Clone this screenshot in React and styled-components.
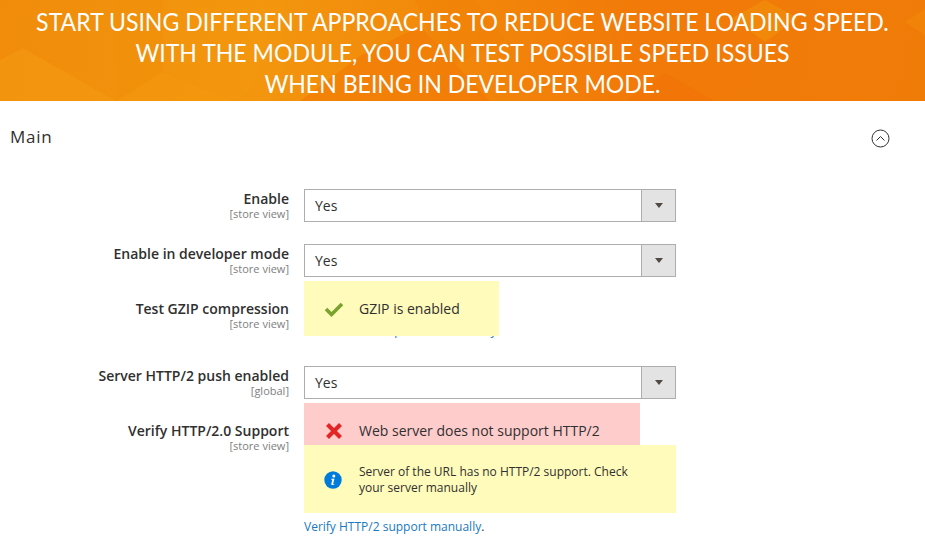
import React from 'react';
import styled, { createGlobalStyle } from 'styled-components';

const Global = createGlobalStyle`
  html, body { margin: 0; padding: 0; background: #fff; }
  body { font-family: "Open Sans", "Noto Sans", sans-serif; color: #303030; width: 925px; height: 553px; overflow: hidden; }
`;
const Banner = styled.header`
  position: relative; height: 101px; overflow: hidden;
  background: linear-gradient(100deg, #f08c0a 0%, #f3960e 28%, #f2880a 48%, #f27a08 68%, #f07c08 100%);
`;
const BannerArt = styled.svg`
  position: absolute; inset: 0; width: 100%; height: 100%;
`;
const BannerText = styled.h1`
  position: relative; margin: 0; padding-top: 6px; text-align: center; white-space: nowrap;
  font: 400 25px/31px "Lato", sans-serif; color: #fff;
  text-transform: uppercase; transform: scaleX(0.922); transform-origin: 462px 0;
`;
const SectionHead = styled.div`
  display: flex; align-items: center; justify-content: space-between;
  padding: 23px 35px 0 10px; height: 25px;
`;
const SectionTitle = styled.h2`
  margin: 0; font: 400 17px/22px "Open Sans", sans-serif; color: #303030; letter-spacing: 0.7px;
`;
const Toggle = styled.svg`width: 19px; height: 19px; display: block; margin-top: 4px;`;
const Form = styled.div`
  display: flex; flex-direction: column; padding-top: 40px;
`;
const Row = styled.div`
  display: grid; grid-template-columns: 289px 372px; column-gap: 15px;
  margin-top: ${p => p.$top || 0}px; min-height: ${p => p.$h || 33}px;
`;
const Label = styled.div`
  text-align: right; padding-top: 1px;
`;
const LabelText = styled.div`
  font: 600 14px/18px "Open Sans", sans-serif; color: #303030;
`;
const Scope = styled.div`
  font: 400 11px/12px "Open Sans", sans-serif; color: #808080;
`;
const Select = styled.div`
  display: flex; height: 33px; box-sizing: border-box; border: 1px solid #adadad; background: #fff;
`;
const SelectValue = styled.div`
  flex: 1; padding-left: 10px; font: 400 14px/31px "Open Sans", sans-serif; color: #303030;
`;
const SelectArrow = styled.div`
  width: 33px; background: #e3e3e3; border-left: 1px solid #adadad;
  display: flex; align-items: center; justify-content: center;
  &::after { content: ""; border-style: solid; border-width: 5px 4px 0; border-color: #514943 transparent transparent; }
`;
const Control = styled.div`
  position: relative; display: flex; flex-direction: column;
`;
const Alert = styled.div`
  display: flex; align-items: center; box-sizing: border-box;
  background: ${p => p.$bg}; width: ${p => p.$w}px; height: ${p => p.$h}px;
  padding-top: ${p => p.$pt || 0}px;
`;
const IconSlot = styled.div`
  width: 55px; display: flex; justify-content: center; padding-left: ${p => p.$pl ?? 4}px; box-sizing: border-box; flex: none;
`;
const AlertText = styled.div`
  font: 400 14px/18px "Open Sans", sans-serif; color: #303030;
`;
const AlertSmall = styled.div`
  font: 400 12px/16px "Open Sans", sans-serif; color: #303030; width: 290px;
`;
const Overlay = styled.div`position: absolute; left: 0; top: -18px;`;
const Hint = styled.a`
  font: 400 12px/16px "Open Sans", sans-serif; color: #1979c3; text-decoration: none; margin-top: 6px; display: block;
  span { color: #303030; }
`;
const Hidden = styled.a`
  font: 400 12px/16px "Open Sans", sans-serif; color: #1979c3; display: block; margin-top: 24px;
`;

const Check = () => (
  <svg width="20" height="16" viewBox="0 0 20 16"><path d="M2 8l5.5 5.5L18 3" fill="none" stroke="#79A22E" strokeWidth="3.6" /></svg>
);
const Cross = () => (
  <svg width="16" height="16" viewBox="0 0 16 16"><path d="M1.5 1.5l13 13M14.5 1.5l-13 13" fill="none" stroke="#E22626" strokeWidth="4.2" /></svg>
);
const Info = () => (
  <svg width="18" height="18" viewBox="0 0 18 18">
    <circle cx="9" cy="9" r="8.7" fill="#007BDB" />
    <circle cx="9.8" cy="5" r="1.5" fill="#fff" />
    <path d="M7.4 7.8h3.1L9.2 12.6c-.1.5.3.5 1.2.1l-.1.7c-1.6.8-3.3.7-3-.7l1-3.9H7.3z" fill="#fff" />
  </svg>
);

const Field = ({ label, scope }) => (
  <Label><LabelText>{label}</LabelText><Scope>[{scope}]</Scope></Label>
);
const YesSelect = () => (
  <Select><SelectValue>Yes</SelectValue><SelectArrow /></Select>
);

export default function App() {
  return (
    <>
      <Global />
      <Banner>
        <BannerArt viewBox="0 0 925 101" preserveAspectRatio="none">
          <path d="M0 60L23 48l93 53H0z" fill="#f59c12" opacity=".5" />
          <path d="M116 0h47v72l-47 29z" fill="#f29008" opacity=".35" />
          <path d="M116 101l47-29 70 29z" fill="#f59a10" opacity=".4" />
          <path d="M163 0h120v72l-50 29-70-29z" fill="#f59c12" opacity=".18" />
          <path d="M300 101l60-45 60-30 70 75z" fill="#f27606" opacity=".55" />
          <path d="M415 0h60l30 40-60 30z" fill="#f27e06" opacity=".35" />
          <path d="M732 18L765 0l33 18-33 24z" fill="#f28e0a" opacity=".7" />
          <path d="M625 101l40-28 50 28z" fill="#f27206" opacity=".5" />
          <path d="M905 22l20-13v26z" fill="#f28808" opacity=".6" />
        </BannerArt>
        <BannerText>
          Start using different approaches to reduce website loading speed.<br />
          With the module, you can test possible speed issues<br />
          when being in developer mode.
        </BannerText>
      </Banner>
      <SectionHead>
        <SectionTitle>Main</SectionTitle>
        <Toggle viewBox="0 0 19 19">
          <circle cx="9.5" cy="9.5" r="8.5" fill="none" stroke="#303030" strokeWidth="1" />
          <path d="M5.5 11.5L9.5 7.5l4 4" fill="none" stroke="#303030" strokeWidth="1" />
        </Toggle>
      </SectionHead>
      <Form>
        <Row><Field label="Enable" scope="store view" /><Control><YesSelect /></Control></Row>
        <Row $top={22}><Field label="Enable in developer mode" scope="store view" /><Control><YesSelect /></Control></Row>
        <Row $top={22} $h={67}>
          <Field label="Test GZIP compression" scope="store view" />
          <Control>
            <Hidden>Check GZIP compression manually</Hidden>
            <Overlay>
              <Alert $bg="#fffbbb" $w={195} $h={55}>
                <IconSlot><Check /></IconSlot>
                <AlertText>GZIP is enabled</AlertText>
              </Alert>
            </Overlay>
          </Control>
        </Row>
        <Row><Field label="Server HTTP/2 push enabled" scope="global" /><Control><YesSelect /></Control></Row>
        <Row $top={22}>
          <Field label="Verify HTTP/2.0 Support" scope="store view" />
          <Control>
            <Overlay>
              <Alert $bg="#ffcccc" $w={336} $h={42} $pt={14}>
                <IconSlot><Cross /></IconSlot>
                <AlertText>Web server does not support HTTP/2</AlertText>
              </Alert>
              <Alert $bg="#fffbbb" $w={372} $h={68} $pt={2}>
                <IconSlot $pl={2}><Info /></IconSlot>
                <AlertSmall>Server of the URL has no HTTP/2 support. Check your server manually</AlertSmall>
              </Alert>
              <Hint>Verify HTTP/2 support manually<span>.</span></Hint>
            </Overlay>
          </Control>
        </Row>
      </Form>
    </>
  );
}
